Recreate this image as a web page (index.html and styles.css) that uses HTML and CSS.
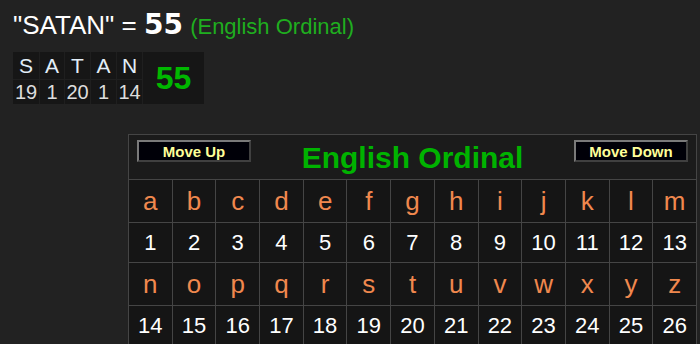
FILE: index.html
```html
<!DOCTYPE html>
<html>
<head>
<meta charset="utf-8">
<link rel="stylesheet" href="styles.css">
</head>
<body>
  <div class="phrase">"SATAN" = <b class="total">55</b> <span class="cipher-name">(English Ordinal)</span></div>

  <div class="breakdown">
    <div class="bd-cell bd-letter">S</div>
    <div class="bd-cell bd-letter">A</div>
    <div class="bd-cell bd-letter">T</div>
    <div class="bd-cell bd-letter">A</div>
    <div class="bd-cell bd-letter">N</div>
    <div class="bd-cell bd-sum">55</div>
    <div class="bd-cell bd-num">19</div>
    <div class="bd-cell bd-num">1</div>
    <div class="bd-cell bd-num">20</div>
    <div class="bd-cell bd-num">1</div>
    <div class="bd-cell bd-num">14</div>
  </div>

  <div class="chart">
    <div class="chart-head">
      <button class="move-btn">Move Up</button>
      <span class="chart-title">English Ordinal</span>
      <button class="move-btn">Move Down</button>
    </div>
    <div class="c-letter">a</div><div class="c-letter">b</div><div class="c-letter">c</div><div class="c-letter">d</div><div class="c-letter">e</div><div class="c-letter">f</div><div class="c-letter">g</div><div class="c-letter">h</div><div class="c-letter">i</div><div class="c-letter">j</div><div class="c-letter">k</div><div class="c-letter">l</div><div class="c-letter">m</div>
    <div class="c-num">1</div><div class="c-num">2</div><div class="c-num">3</div><div class="c-num">4</div><div class="c-num">5</div><div class="c-num">6</div><div class="c-num">7</div><div class="c-num">8</div><div class="c-num">9</div><div class="c-num">10</div><div class="c-num">11</div><div class="c-num">12</div><div class="c-num">13</div>
    <div class="c-letter">n</div><div class="c-letter">o</div><div class="c-letter">p</div><div class="c-letter">q</div><div class="c-letter">r</div><div class="c-letter">s</div><div class="c-letter">t</div><div class="c-letter">u</div><div class="c-letter">v</div><div class="c-letter">w</div><div class="c-letter">x</div><div class="c-letter">y</div><div class="c-letter">z</div>
    <div class="c-num">14</div><div class="c-num">15</div><div class="c-num">16</div><div class="c-num">17</div><div class="c-num">18</div><div class="c-num">19</div><div class="c-num">20</div><div class="c-num">21</div><div class="c-num">22</div><div class="c-num">23</div><div class="c-num">24</div><div class="c-num">25</div><div class="c-num">26</div>
  </div>
</body>
</html>
```

FILE: styles.css
```css
html, body {
  margin: 0;
  background: #222222;
  font-family: "Liberation Sans", Arial, sans-serif;
  color: #ffffff;
}

body {
  padding: 8px 0 0 13px;
  overflow: hidden;
}

/* phrase and its value */
.phrase {
  font-size: 26px;
  line-height: 34px;
  height: 34px;
  white-space: nowrap;
}

.total {
  font-family: "DejaVu Sans", Verdana, sans-serif;
  font-size: 28px;
  font-weight: bold;
}

.cipher-name {
  font-size: 22px;
  color: #1fae1f;
}

/* letter-by-letter breakdown */
.breakdown {
  margin-top: 10px;
  display: grid;
  grid-template-columns: 26px 24px 25px 25px 25px 61px;
  grid-template-rows: 27px 24px;
  gap: 1px;
  width: 188px;
  background: #1f1f1f;
}

.bd-cell {
  background: #161616;
  display: flex;
  align-items: center;
  justify-content: center;
}

.bd-letter {
  font-size: 21px;
  color: #e2eef8;
}

.bd-num {
  font-size: 20px;
  color: #dddddd;
}

.bd-sum {
  grid-column: 6;
  grid-row: 1 / span 2;
  font-size: 32px;
  font-weight: bold;
  color: #00b800;
}

/* cipher chart */
.chart {
  margin: 30px 0 0 115px;
  width: 569px;
  display: grid;
  grid-template-columns: repeat(13, 1fr);
  border-left: 1px solid #454545;
  border-top: 1px solid #454545;
  box-sizing: border-box;
  background: #151515;
}

.chart > div {
  box-sizing: border-box;
  border-right: 1px solid #454545;
  border-bottom: 1px solid #454545;
  display: flex;
  align-items: center;
  justify-content: center;
}

.chart > .chart-head {
  grid-column: 1 / -1;
  height: 45px;
  background: #1b1b1b;
  justify-content: space-between;
  align-items: flex-start;
  padding: 0 8px;
}

.move-btn {
  margin-top: 5px;
  width: 114px;
  height: 22px;
  padding: 0;
  background: #000008;
  color: #ffff99;
  font-family: "Liberation Sans", Arial, sans-serif;
  font-size: 15px;
  font-weight: bold;
  border: 2px solid;
  border-color: #7a7a7a #404040 #404040 #7a7a7a;
}

.chart-title {
  align-self: center;
  font-size: 30px;
  font-weight: bold;
  color: #00b300;
  margin-top: 1px;
}

.c-letter {
  height: 43px;
  font-size: 26px;
  color: #f0884e;
}

.c-num {
  height: 40px;
  font-size: 22px;
  color: #ffffff;
}
```
